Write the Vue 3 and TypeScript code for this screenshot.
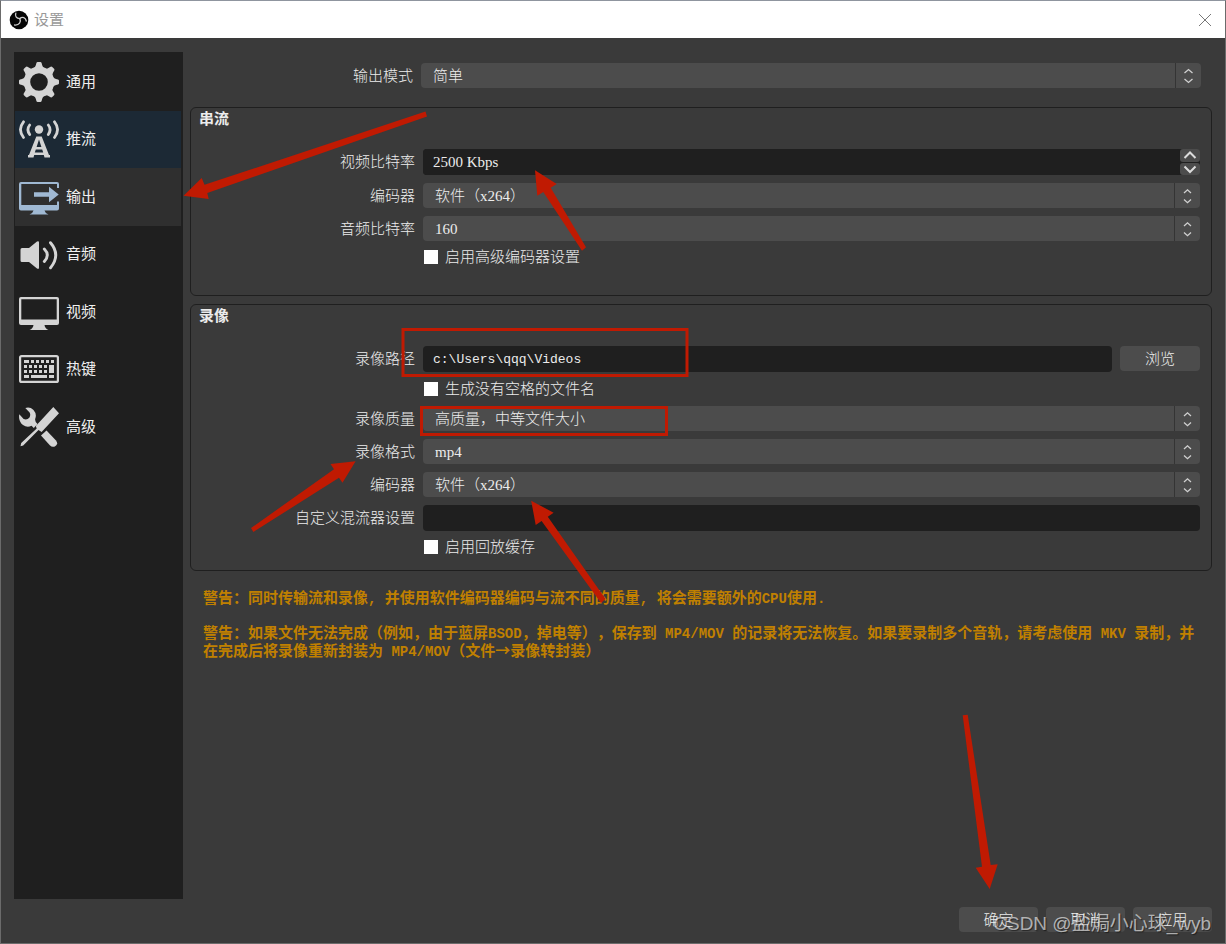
<script setup lang="ts">
import { ref } from 'vue'

type Icon = 'general' | 'stream' | 'output' | 'audio' | 'video' | 'hotkeys' | 'advanced'
interface NavItem { id: Icon; label: string }
interface Field {
  id: string
  kind: 'combo' | 'spin' | 'text' | 'path' | 'check'
  label: string
  value?: string
}
interface Group { title: string; fields: Field[] }

const navItems: NavItem[] = [
  { id: 'general', label: '通用' },
  { id: 'stream', label: '推流' },
  { id: 'output', label: '输出' },
  { id: 'audio', label: '音频' },
  { id: 'video', label: '视频' },
  { id: 'hotkeys', label: '热键' },
  { id: 'advanced', label: '高级' },
]
const selected = ref<Icon>('output')
const highlighted: Icon = 'stream'

const groups: Group[] = [
  {
    title: '串流',
    fields: [
      { id: 'vbitrate', kind: 'spin', label: '视频比特率', value: '2500 Kbps' },
      { id: 'encoder', kind: 'combo', label: '编码器', value: '软件（x264）' },
      { id: 'abitrate', kind: 'combo', label: '音频比特率', value: '160' },
      { id: 'advenc', kind: 'check', label: '启用高级编码器设置' },
    ],
  },
  {
    title: '录像',
    fields: [
      { id: 'recpath', kind: 'path', label: '录像路径', value: 'c:\\Users\\qqq\\Videos' },
      { id: 'nospace', kind: 'check', label: '生成没有空格的文件名' },
      { id: 'quality', kind: 'combo', label: '录像质量', value: '高质量，中等文件大小' },
      { id: 'format', kind: 'combo', label: '录像格式', value: 'mp4' },
      { id: 'recenc', kind: 'combo', label: '编码器', value: '软件（x264）' },
      { id: 'muxer', kind: 'text', label: '自定义混流器设置', value: '' },
      { id: 'replay', kind: 'check', label: '启用回放缓存' },
    ],
  },
]

const toothAngles = [0, 45, 90, 135, 180, 225, 270, 315]
const topKeys = [12, 17, 22, 27, 32]
const midKeys = [5, 10, 15, 20, 25]
</script>

<template>
  <div class="window">
    <header class="titlebar">
      <svg class="logo" viewBox="0 0 20 20" aria-hidden="true">
        <circle cx="10" cy="10" r="9.300" fill="#060606" />
        <g fill="none" stroke="#cfcfcf" stroke-width="1.300" stroke-linecap="round">
          <path d="M6.800 3.200C5.800 6 7.200 8.200 10.800 8.600" />
          <path d="M10.800 8.600C13.500 6.400 16.600 7.600 17.300 11" />
          <path d="M10.800 8.600C12.400 12 10.400 15.400 5.600 15" />
        </g>
      </svg>
      <h1>设置</h1>
      <button class="close" type="button" aria-label="关闭">
        <svg viewBox="0 0 12 12"><path d="M0 0L12 12M12 0L0 12" stroke="#777" fill="none" /></svg>
      </button>
    </header>

    <div class="body">
      <nav class="sidebar">
        <button
          v-for="item in navItems"
          :key="item.id"
          type="button"
          :class="['nav', { selected: selected === item.id, highlighted: highlighted === item.id }]"
          @click="selected = item.id"
        >
          <svg viewBox="0 0 40 40" fill="currentColor" aria-hidden="true">
            <g v-if="item.id === 'general'">
              <circle cx="20" cy="20" r="12" fill="none" stroke="currentColor" stroke-width="6.400" />
              <path
                v-for="a in toothAngles"
                :key="a"
                d="M13.800 6.800Q16.400 5.500 16.900 3L17.400 1Q17.700 0 18.700 0H21.300Q22.300 0 22.600 1L23.100 3Q23.600 5.500 26.200 6.800Z"
                :transform="`rotate(${a} 20 20)`"
              />
            </g>
            <g v-else-if="item.id === 'stream'">
              <circle cx="20" cy="9.500" r="4.200" />
              <g fill="none" stroke="currentColor" stroke-width="2.800" stroke-linecap="round">
                <path d="M10.700 5Q7.200 9.500 10.700 14.500M29.300 5Q32.800 9.500 29.300 14.500" />
                <path d="M4.500 1.800Q-1.600 9.500 4.500 17.500M35.500 1.800Q41.600 9.500 35.500 17.500" />
              </g>
              <path fill-rule="evenodd" d="M17.300 16.500H22.700L30 35H31V37.500H25.500L24.800 35H15.200L14.500 37.500H9V35H10ZM20 19.500L17.600 27H22.400ZM16.800 29.500L15.800 32.500H24.200L23.200 29.500Z" />
            </g>
            <g v-else-if="item.id === 'output'">
              <path d="M2 5H38Q40 5 40 7V11H38V7H2.300V28H38V24.500H40V31.500Q40 33.500 38 33.500H25.500Q26 36 29.500 37.600H10.500Q14 36 14.500 33.500H2Q0 33.500 0 31.500V7Q0 5 2 5Z" />
              <path d="M15 15.300H30V9.700L39.700 17.500L30 25.300V19.700H15Z" />
            </g>
            <g v-else-if="item.id === 'audio'">
              <path d="M3 13H10L18 6.500Q20 5.500 20 7.500V32.500Q20 34.800 18 33.500L10 27H3Q1.500 27 1.500 25.500V14.500Q1.500 13 3 13Z" />
              <g fill="none" stroke="currentColor" stroke-width="2.900" stroke-linecap="round">
                <path d="M25.300 14Q31.300 20 25.300 26.500" />
                <path d="M31.500 7.700Q42 20 31.500 32.800" />
              </g>
            </g>
            <g v-else-if="item.id === 'video'">
              <path fill-rule="evenodd" d="M2 5H38Q40 5 40 7V31Q40 33 38 33H25.500Q26 36.500 29.500 38H10.500Q14 36.500 14.500 33H2Q0 33 0 31V7Q0 5 2 5ZM2.300 7.300V27.500H37.700V7.300Z" />
            </g>
            <g v-else-if="item.id === 'hotkeys'">
              <rect x="1.100" y="6.100" width="37.800" height="25.800" rx="1.500" fill="none" stroke="currentColor" stroke-width="2.200" />
              <rect x="5" y="10" width="5" height="3" />
              <rect v-for="x in topKeys" :key="'t' + x" :x="x" y="10" width="3" height="3" />
              <rect v-for="x in midKeys" :key="'m' + x" :x="x" y="15" width="3" height="3" />
              <rect v-for="x in midKeys" :key="'n' + x" :x="x" y="20" width="3" height="3" />
              <rect x="30" y="15" width="5" height="8" />
              <rect x="5" y="25" width="5" height="3" />
              <rect x="12" y="25" width="16" height="3" />
              <rect x="30" y="25" width="5" height="3" />
            </g>
            <g v-else>
              <path d="M6.300 1Q11 -.5 14.500 3Q18 7 16.300 11.500Q15.500 14.500 18.500 17L14.800 21L12.500 18.800Q8 20.800 4 18Q-1 14 .3 7.200L4.600 12Q8 13.200 10.300 10.800Q12 8 10.600 5.500Z" />
              <path d="M34.300 0L40 6.200L22.600 24.900L19.500 23L4.200 38.500L1.500 39.200L2.200 36L17.700 21.400L16.800 19Z" />
              <path d="M22 28.600L27.500 23.500L37 33.500Q39.500 37 36.500 39Q33.500 41 30.800 38.300Z" />
            </g>
          </svg>
          <span>{{ item.label }}</span>
        </button>
      </nav>

      <main class="panel">
        <div class="mode">
          <label for="mode">输出模式</label>
          <div class="combo">
            <select id="mode"><option>简单</option></select>
            <svg viewBox="0 0 26 25" aria-hidden="true">
              <path d="M.5 0V25" stroke="#343434" />
              <path d="M9.500 10L13.500 6.500L17.500 10M9.500 16L13.500 19.500L17.500 16" stroke="#d0d0d0" fill="none" stroke-width="1.300" />
            </svg>
          </div>
        </div>

        <section v-for="group in groups" :key="group.title" class="group">
          <h2>{{ group.title }}</h2>
          <div class="fields">
            <div v-for="f in group.fields" :key="f.id" class="field">
              <template v-if="f.kind === 'check'">
                <label class="check"><input type="checkbox" />{{ f.label }}</label>
              </template>
              <template v-else>
                <label class="name" :for="f.id">{{ f.label }}</label>
                <div v-if="f.kind === 'combo'" class="combo">
                  <select :id="f.id"><option>{{ f.value }}</option></select>
                  <svg viewBox="0 0 26 25" aria-hidden="true">
                    <path d="M.5 0V25" stroke="#343434" />
                    <path d="M10 10L13.500 6.800L17 10M10 16.500L13.500 19.700L17 16.500" stroke="#d0d0d0" fill="none" stroke-width="1.300" />
                  </svg>
                </div>
                <div v-else-if="f.kind === 'spin'" class="spin">
                  <input :id="f.id" type="text" :value="f.value" />
                  <div class="steps">
                    <button type="button" aria-label="增加">
                      <svg viewBox="0 0 20 12"><path d="M4.500 9L10 3.500L15.500 9" /></svg>
                    </button>
                    <button type="button" aria-label="减少">
                      <svg viewBox="0 0 20 12"><path d="M4.500 3.500L10 9L15.500 3.500" /></svg>
                    </button>
                  </div>
                </div>
                <div v-else-if="f.kind === 'path'" class="path">
                  <input :id="f.id" type="text" :value="f.value" />
                  <button class="btn" type="button">浏览</button>
                </div>
                <input v-else :id="f.id" type="text" :value="f.value" />
              </template>
            </div>
          </div>
        </section>

        <div class="warnings">
          <p>警告：同时传输流和录像<i>, </i>并使用软件编码器编码与流不同的质量<i>, </i>将会需要额外的<i>CPU</i>使用<i>.</i></p>
          <p>
            警告：如果文件无法完成（例如，由于蓝屏<i>BSOD</i>，掉电等），保存到<i> MP4/MOV </i>的记录将无法恢复。如果要录制多个音轨，请考虑使用<i> MKV </i>录制，并<br />在完成后将录像重新封装为<i> MP4/MOV</i>（文件→录像转封装）
          </p>
        </div>
      </main>
    </div>

    <footer class="actions">
      <button class="btn" type="button">确定</button>
      <button class="btn" type="button">取消</button>
      <button class="btn" type="button">应用</button>
    </footer>

    <svg class="marks" width="1226" height="944" viewBox="0 0 1226 944" aria-hidden="true">
      <g fill="#c01a02">
        <path d="M425.500 111.500L427 116.500L207.300 193L208.700 199L183.500 195.700L201.700 178L204.500 184.800Z" />
        <path d="M535 170.300L556.700 184L550.700 187.700L586 247.300L582 250.700L543.300 192L537.300 195.700Z" />
        <path d="M355.600 461.300L342.500 482.700L339 477.700L253.300 532L251 528L334 469.300L330.500 464Z" />
        <path d="M531.200 500.700L553.600 512.700L547.800 516.700L605.500 599L601 603L541.600 521L535.700 525Z" />
        <path d="M962.700 715.300L967.700 714.700L990.700 865L997.700 864.300L989.700 889L975.700 867.700L982 866.700Z" />
      </g>
      <g fill="none" stroke="#c01a02" stroke-width="3">
        <rect x="403" y="329.500" width="284" height="46" />
        <rect x="421.500" y="407.500" width="245" height="27" />
      </g>
    </svg>
    <div class="watermark">CSDN @盐焗小心球_wyb</div>
  </div>
</template>

<style>
body {
  margin: 0;
}
</style>

<style scoped>
.window {
  position: relative;
  box-sizing: border-box;
  min-height: 100vh;
  display: flex;
  flex-direction: column;
  background: #3a3a3a;
  border: 1px solid #6b6b6b;
  border-top-color: #8f959f;
  color: #ececec;
  font: 300 15px/18px "Liberation Serif", "Noto Sans CJK SC", sans-serif;
  text-spacing-trim: space-all;
  overflow: hidden;
}
button,
input,
select {
  font: inherit;
  color: inherit;
  border: 0;
  margin: 0;
  padding: 0;
  box-sizing: border-box;
}
h1,
h2,
p {
  margin: 0;
}
.titlebar {
  height: 37px;
  display: flex;
  align-items: center;
  padding: 0 14px 0 8px;
  background: #fff;
}
.logo {
  width: 20px;
  height: 20px;
}
.titlebar h1 {
  margin-left: 5px;
  flex: 1;
  font-size: 15px;
  font-weight: 400;
  color: #999;
}
.close {
  display: flex;
  background: none;
}
.close svg {
  width: 12px;
  height: 12px;
}
.body {
  flex: 1;
  display: flex;
  gap: 7px;
  padding: 14px 13px 0;
}
.sidebar {
  flex: none;
  box-sizing: border-box;
  width: 169px;
  padding: 1px 2px 0 1px;
  background: #1f1f1f;
}
.nav {
  display: flex;
  align-items: center;
  gap: 7px;
  width: 100%;
  height: 58px;
  padding-left: 4px;
  background: none;
  color: #d4d4d4;
  font-weight: 400;
}
.nav:nth-child(even) {
  height: 57px;
}
.nav svg {
  width: 40px;
  height: 40px;
}
.nav span {
  padding-bottom: 1px;
  color: #f0f0f0;
}
.nav.highlighted {
  background: #1c2935;
}
.nav.selected {
  background: #2f2f2f;
  color: #a0b9d3;
}
.panel {
  flex: 1;
  min-width: 0;
  padding-top: 11px;
}
.mode {
  display: grid;
  grid-template-columns: 223px 1fr;
  gap: 8px;
  align-items: center;
  padding-right: 11px;
  margin-bottom: 19px;
  text-align: right;
}
.combo {
  display: grid;
  grid-template-columns: 1fr 26px;
  height: 25px;
}
.combo select {
  grid-area: 1 / 1 / 2 / 3;
  appearance: none;
  width: 100%;
  height: 25px;
  padding: 0 30px 0 12px;
  border-radius: 4px;
  background: #4c4c4c;
}
.combo svg {
  grid-area: 1 / 2;
  width: 26px;
  height: 25px;
  pointer-events: none;
}
.group {
  border: 1px solid #1f1f1f;
  border-radius: 6px;
  padding: 2px 11px 13px 0;
  margin-bottom: 8px;
}
.group:nth-of-type(1) {
  padding-bottom: 28px;
}
.group h2 {
  padding-left: 8px;
  margin-bottom: 21px;
  font-size: 15px;
  font-weight: 700;
}
.fields {
  display: flex;
  flex-direction: column;
  gap: 8px;
}
.field {
  display: grid;
  grid-template-columns: 224px 1fr;
  column-gap: 8px;
  align-items: center;
}
.name {
  text-align: right;
}
.check {
  grid-column: 2;
  display: flex;
  align-items: center;
  gap: 7px;
  padding-left: 1px;
  height: 16px;
}
.check input {
  appearance: none;
  width: 14px;
  height: 14px;
  background: #fff;
}
.field:has(.check):not(:last-child) {
  padding: 1px 0;
}
.field:last-child {
  padding-bottom: 2px;
}
input[type="text"] {
  width: 100%;
  min-width: 0;
  height: 26px;
  padding: 0 10px;
  border-radius: 4px;
  background: #1f1f1f;
}
.spin {
  display: flex;
  border-radius: 4px;
  background: #1f1f1f;
}
.steps {
  flex: none;
  width: 20px;
  display: grid;
  grid-template-rows: 1fr 1fr;
  gap: 1px;
}
.steps button {
  display: flex;
  align-items: center;
  background: #4c4c4c;
  border-radius: 3px;
}
.steps svg {
  width: 20px;
  height: 12px;
  fill: none;
  stroke: #dcdcdc;
  stroke-width: 2;
}
.path {
  display: grid;
  grid-template-columns: 1fr 80px;
  gap: 8px;
}
.path input {
  font-family: "Liberation Mono", "Noto Sans CJK SC", monospace;
  font-size: 13px;
}
.btn {
  width: 80px;
  height: 25px;
  border-radius: 4px;
  background: #4c4c4c;
}
.warnings {
  display: flex;
  flex-direction: column;
  gap: 17px;
  padding: 9px 0 0 13px;
  color: #c08000;
  font-family: "Noto Sans CJK SC", sans-serif;
  font-weight: 700;
  white-space: nowrap;
}
.warnings i {
  font-family: "Liberation Mono", monospace;
  font-size: 14px;
  font-style: normal;
  line-height: 0;
  white-space: pre;
}
.actions {
  display: flex;
  justify-content: flex-end;
  gap: 8px;
  padding: 8px 13px 11px;
}
.actions .btn {
  width: 79px;
}
.marks {
  position: absolute;
  top: -1px;
  left: -1px;
  pointer-events: none;
}
.watermark {
  position: absolute;
  right: 14px;
  bottom: 7px;
  font: 400 19px/24px "Liberation Sans", "Noto Sans CJK SC", sans-serif;
  color: rgba(255, 255, 255, 0.62);
  text-shadow: 1px 1px 1px rgba(0, 0, 0, 0.5);
  pointer-events: none;
}
</style>
